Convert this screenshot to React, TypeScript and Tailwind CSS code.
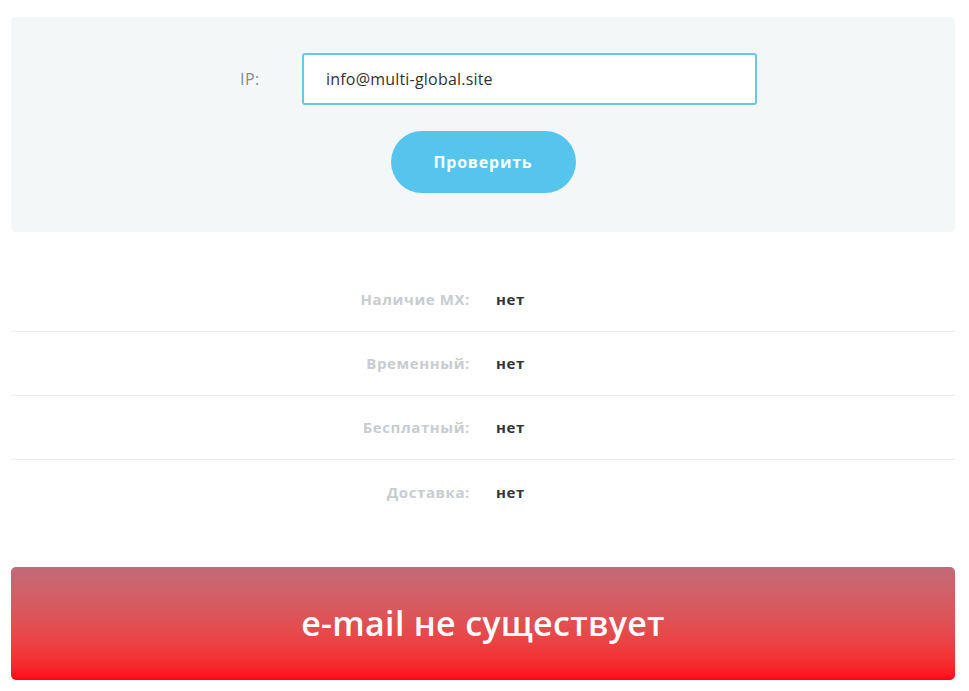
import React from "react";

const rows = [
  ["Наличие MX:", "нет"],
  ["Временный:", "нет"],
  ["Бесплатный:", "нет"],
  ["Доставка:", "нет"],
];

export default function App() {
  return (
    <div className="min-h-[691px] bg-white pl-[11px] pr-[14px] pt-[17px] font-['Open_Sans',sans-serif]">
      <div className="flex h-[215px] flex-col rounded-[5px] bg-[#f4f7f8] pt-[36px]">
        <div className="flex items-center pl-[229px]">
          <span className="w-[62px] text-[16px] tracking-[0.5px] text-[#85898d]">IP:</span>
          <div className="flex h-[52px] w-[455px] items-center rounded-[3px] border-2 border-[#6cc6e8] bg-white pl-[22px] text-[16px] tracking-[0.2px] text-[#333]">
            info@multi-global.site
          </div>
        </div>
        <div className="mt-[26px] flex justify-center">
          <button className="h-[62px] w-[185px] rounded-full bg-[#55c5ee] text-[16px] font-bold tracking-[0.8px] text-white">
            Проверить
          </button>
        </div>
      </div>
      <div className="mt-[36px]">
        {rows.map(([k, v], i) => (
          <div
            key={k}
            className={
              "grid h-[64px] grid-cols-2 items-center text-[15px] font-bold tracking-[0.6px] " +
              (i < rows.length - 1 ? "border-b border-[#eceff1]" : "")
            }
          >
            <span className="pr-[13px] text-right text-[#c8ccd1]">{k}</span>
            <span className="pl-[13px] text-[#33363a]">{v}</span>
          </div>
        ))}
      </div>
      <div className="mt-[43px] flex h-[113px] items-center justify-center rounded-[5px] bg-gradient-to-b from-[#c06b78] to-[#ff0014] text-[34px] font-semibold tracking-[0.3px] text-white">
        e-mail не существует
      </div>
    </div>
  );
}
